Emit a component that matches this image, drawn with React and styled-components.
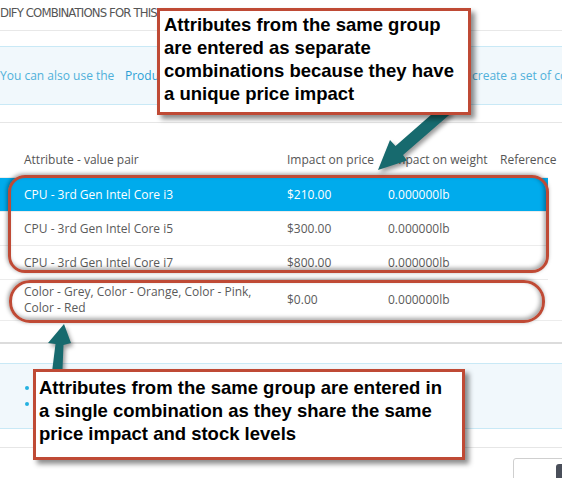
import React from 'react';
import styled, { createGlobalStyle } from 'styled-components';

const Global = createGlobalStyle`
  html, body { margin: 0; padding: 0; background: #fff; }
  body { font-family: "Open Sans", "Liberation Sans", sans-serif; }
`;

const Page = styled.div`
  position: relative;
  width: 562px;
  height: 478px;
  overflow: hidden;
  background: #fff;
  font-family: "Open Sans", "Liberation Sans", sans-serif;
  font-size: 12px;
  color: #555;
`;

const PanelHeading = styled.div`
  height: 31px;
  box-sizing: border-box;
  border-bottom: 1px solid #e8e8e8;
  padding-top: 5px;
  font-family: "DejaVu Sans Condensed", "DejaVu Sans", sans-serif;
  font-stretch: condensed;
  font-size: 13px;
  letter-spacing: -0.85px;
  line-height: 16px;
  color: #555;
  text-transform: uppercase;
  white-space: nowrap;
`;

const Alert = styled.div`
  margin-top: ${p => p.$top}px;
  height: ${p => p.$h}px;
  box-sizing: border-box;
  background: #f1f8fc;
  border-top: 1px solid #c9e9f6;
  border-bottom: 1px solid #c9e9f6;
  display: flex;
  align-items: center;
  white-space: nowrap;
  overflow: hidden;
  color: #4fb0da;
`;

const AlertText = styled.span`
  flex: none;
  width: ${p => p.$w ? `${p.$w}px` : 'auto'};
  overflow: hidden;
`;

const AlertLink = styled.a`
  flex: none;
  width: ${p => p.$w}px;
  overflow: hidden;
  color: #2a9fd6;
  text-decoration: none;
`;

const BulletList = styled.ul`
  margin: 0;
  padding: 0 0 0 40px;
  color: #4fb0da;
  line-height: 16px;
  li::marker { color: #25b1e0; }
`;

const Divider = styled.div`
  margin-top: ${p => p.$top}px;
  height: ${p => p.$h || 1}px;
  background: ${p => p.$c || '#e6e6e6'};
`;

const Row = styled.div`
  display: grid;
  grid-template-columns: 263px 101px 112px 1fr;
  align-items: center;
  box-sizing: border-box;
  height: ${p => p.$h}px;
  margin-right: 14px;
  padding-left: 24px;
  border-top: 1px solid #ececec;
  background: ${p => p.$active ? '#00abec' : 'transparent'};
  color: ${p => p.$active ? '#fff' : '#5a5a5a'};
  line-height: 16px;
  white-space: nowrap;
`;

const HeadRow = styled(Row)`
  align-items: end;
  margin-right: 0;
  padding-bottom: 9px;
  border-top: none;
  color: #555;
`;

const Cell = styled.div`
  white-space: ${p => p.$wrap ? 'normal' : 'nowrap'};
  padding-right: ${p => p.$wrap ? '20px' : '0'};
  margin-left: ${p => p.$shift || 0}px;
`;

const Footer = styled.div`
  display: flex;
  justify-content: flex-end;
  margin-top: 10px;
  margin-right: -40px;
`;

const Button = styled.div`
  width: 89px;
  height: 30px;
  box-sizing: border-box;
  border: 1px solid #cfcfcf;
  border-radius: 3px;
  background: #fff;
  display: flex;
  align-items: center;
  padding-left: 42px;
`;

const BtnIcon = styled.span`
  width: 8px;
  height: 18px;
  border-radius: 3px;
  background: #4a4f5a;
`;

const Callout = styled.div`
  position: absolute;
  left: ${p => p.$x}px;
  top: ${p => p.$y}px;
  width: ${p => p.$w}px;
  height: ${p => p.$h}px;
  box-sizing: border-box;
  border: 3px solid #bf4a35;
  background: #fff;
  box-shadow: 4px 4px 5px rgba(0, 0, 0, 0.45);
  padding: ${p => p.$pad};
  font-family: "Liberation Sans", Arial, sans-serif;
  font-weight: bold;
  font-size: 18.5px;
  line-height: 23px;
  color: #000;
  white-space: nowrap;
  z-index: 3;
`;

const Highlight = styled.div`
  position: absolute;
  left: ${p => p.$x}px;
  top: ${p => p.$y}px;
  width: ${p => p.$w}px;
  height: ${p => p.$h}px;
  box-sizing: border-box;
  border: 3px solid #bf4a35;
  border-radius: ${p => p.$r}px;
  box-shadow: -1px -1px 4px rgba(0, 0, 0, 0.4), inset -2px -2px 4px rgba(0, 0, 0, 0.35);
  z-index: 1;
`;

const ArrowLayer = styled.svg`
  position: absolute;
  left: 0;
  top: 0;
  width: 562px;
  height: 478px;
  z-index: 2;
  pointer-events: none;
  filter: drop-shadow(2px 3px 2px rgba(0, 0, 0, 0.4));
`;

export default function App() {
  return (
    <Page>
      <Global />
      <PanelHeading>dify combinations for this product</PanelHeading>
      <Alert $top={15} $h={59}>
        <AlertText $w={125}>You can also use the</AlertText>
        <AlertLink $w={347}>Product Combinations Generator in order to automatically</AlertLink>
        <AlertText>create a set of combinations.</AlertText>
      </Alert>
      <Divider $top={17} />
      <HeadRow $h={54}>
        <Cell>Attribute - value pair</Cell>
        <Cell>Impact on price</Cell>
        <Cell $shift={3}>Impact on weight</Cell>
        <Cell>Reference</Cell>
      </HeadRow>
      <Row $active $h={34}>
        <Cell>CPU - 3rd Gen Intel Core i3</Cell>
        <Cell>$210.00</Cell>
        <Cell>0.000000lb</Cell>
        <Cell />
      </Row>
      <Row $h={34}>
        <Cell>CPU - 3rd Gen Intel Core i5</Cell>
        <Cell>$300.00</Cell>
        <Cell>0.000000lb</Cell>
        <Cell />
      </Row>
      <Row $h={34}>
        <Cell>CPU - 3rd Gen Intel Core i7</Cell>
        <Cell>$800.00</Cell>
        <Cell>0.000000lb</Cell>
        <Cell />
      </Row>
      <Row $h={41}>
        <Cell $wrap>Color - Grey, Color - Orange, Color - Pink, Color - Red</Cell>
        <Cell>$0.00</Cell>
        <Cell>0.000000lb</Cell>
        <Cell />
      </Row>
      <Divider $top={0} $c="#ececec" />
      <Divider $top={21} $h={2} $c="#dcdcdc" />
      <Alert $top={19} $h={66}>
        <BulletList>
          <li>&nbsp;</li>
          <li>&nbsp;</li>
        </BulletList>
      </Alert>
      <Divider $top={18} $c="#e6e6e6" />
      <Footer>
        <Button><BtnIcon /></Button>
      </Footer>

      <Highlight $x={8} $y={175} $w={541} $h={98} $r={17} />
      <Highlight $x={9} $y={280} $w={536} $h={43} $r={21} />

      <ArrowLayer viewBox="0 0 562 478">
        <polygon
          fill="#176a6e"
          points="444,103.5 395.5,146 390,140 378,170 407,160.5 403,155 452,112.5"
        />
        <polygon
          fill="#176a6e"
          points="51,380 55.5,344 48,343 64,324 71,343 63.5,345 62,381"
        />
      </ArrowLayer>

      <Callout $x={157} $y={8} $w={314} $h={107} $pad="2px 0 0 4px">
        Attributes from the same group<br />
        are entered as separate<br />
        combinations because they have<br />
        a unique price impact
      </Callout>
      <Callout $x={33} $y={369} $w={432} $h={91} $pad="4px 0 0 3px">
        Attributes from the same group are entered in<br />
        a single combination as they share the same<br />
        price impact and stock levels
      </Callout>
    </Page>
  );
}
